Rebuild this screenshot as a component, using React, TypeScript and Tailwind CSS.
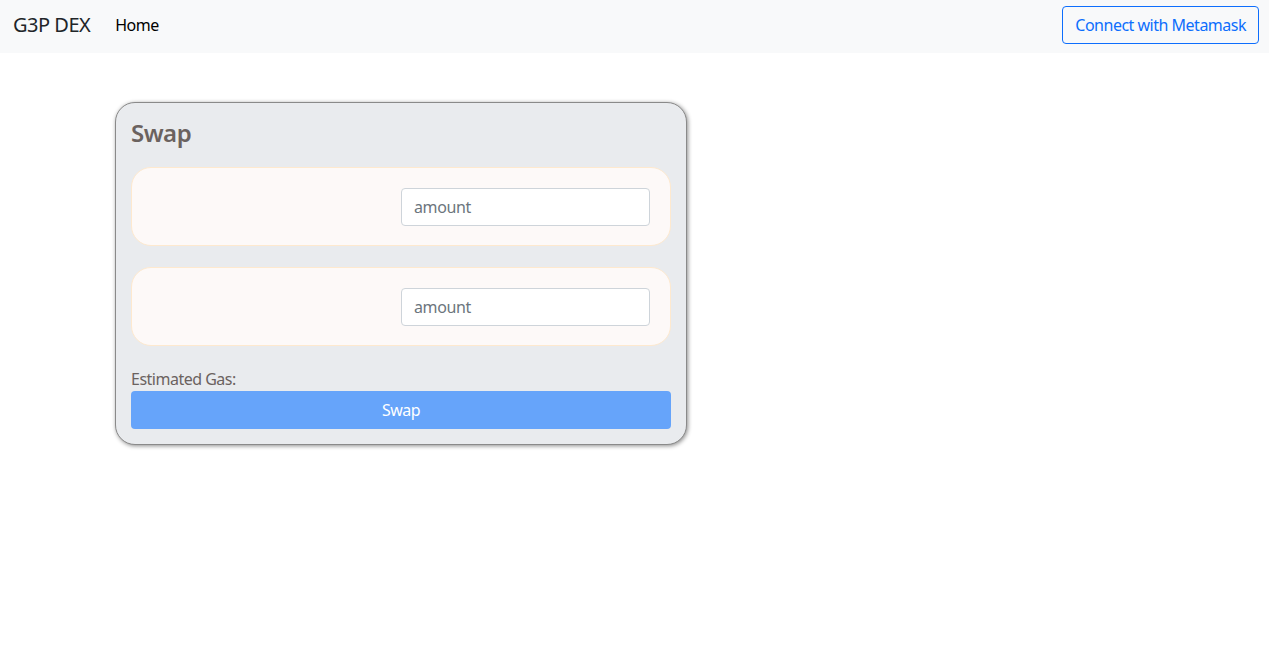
import React from "react";

function TokenBox() {
  return (
    <div className="flex h-[79px] items-center justify-end rounded-[20px] border border-[#fee9cf] bg-[#fdf9f8] pr-[20px]">
      <input
        placeholder="amount"
        className="h-[38px] w-[249px] rounded-[4px] border border-[#ced4da] bg-white px-[12px] text-[16px] tracking-[-0.4px] text-[#212529] placeholder:text-[#6c757d] outline-none"
      />
    </div>
  );
}

export default function App() {
  return (
    <div className="min-h-[663px] bg-white font-['Noto_Sans',sans-serif] tracking-[-0.5px] text-[#212529]">
      <nav className="flex h-[53px] items-center justify-between bg-[#f8f9fa] pb-[3px] pl-[13px] pr-[10px]">
        <div className="flex items-center">
          <span className="text-[20px] leading-[24px] text-[#212529]">G3P DEX</span>
          <span className="ml-[25px] text-[16px] leading-[24px] text-black">Home</span>
        </div>
        <button className="h-[38px] rounded-[4px] border border-[#0d6efd] px-[12px] text-[16px] leading-[24px] text-[#0d6efd]">
          Connect with Metamask
        </button>
      </nav>
      <div className="pl-[115px] pt-[49px]">
        <div className="flex w-[572px] flex-col rounded-[20px] border border-[#8a8a8a] bg-[#e9ebee] px-[15px] pb-[15px] pt-[15px] shadow-[1px_1px_4px_rgba(0,0,0,0.45)]">
          <h2 className="text-[24px] font-semibold leading-[30px] text-[#6b625f]">Swap</h2>
          <div className="mt-[19px] flex flex-col gap-[21px]">
            <TokenBox />
            <TokenBox />
          </div>
          <div className="mt-[23px] text-[16px] leading-[21px] text-[#6b625f]">Estimated Gas:</div>
          <button className="mt-[1px] h-[38px] w-full rounded-[4px] bg-[#66a4fa] text-[16px] text-white">
            Swap
          </button>
        </div>
      </div>
    </div>
  );
}
